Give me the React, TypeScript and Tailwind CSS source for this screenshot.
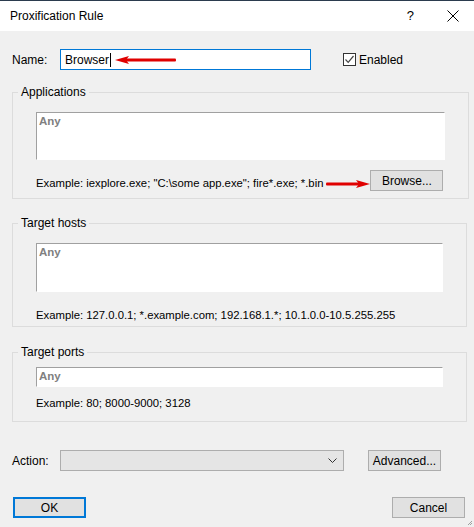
import React from "react";

const font = { fontFamily: '"Liberation Sans", Arial, sans-serif' };

function Group({ title, children, className = "" }: { title: string; children: React.ReactNode; className?: string }) {
  return (
    <fieldset className={`border border-[#dcdcdc] ${className}`}>
      <legend className="ml-[5px] px-[3px] text-[12px] leading-[14px] text-black">{title}</legend>
      <div className="px-[23px]">{children}</div>
    </fieldset>
  );
}

function AnyBox({ h }: { h: string }) {
  return (
    <div className={`${h} w-full bg-white border-t border-l border-t-[#a0a0a0] border-l-[#a0a0a0] border-r border-b border-r-white border-b-white pl-[2px] pt-px text-[11.5px] font-bold text-[#808080] leading-[14px]`}>
      Any
    </div>
  );
}

function Btn({ label, className = "" }: { label: string; className?: string }) {
  return (
    <button className={`h-[21px] w-[73px] bg-[#e1e1e1] border border-[#adadad] text-[12px] leading-[14px] text-black ${className}`}>
      {label}
    </button>
  );
}

function RedArrow({ dir, width }: { dir: "left" | "right"; width: number }) {
  return (
    <svg width={width} height="10" viewBox={`0 0 ${width} 10`} className="block">
      {dir === "left" ? (
        <>
          <rect x="8" y="3.5" width={width - 8} height="3" fill="#e00000" rx="1" />
          <polygon points="0,5 14,1 11,5 14,9" fill="#e00000" />
        </>
      ) : (
        <>
          <rect x="0" y="3.5" width={width - 8} height="3" fill="#e00000" rx="1" />
          <polygon points={`${width},5 ${width - 14},1 ${width - 11},5 ${width - 14},9`} fill="#e00000" />
        </>
      )}
    </svg>
  );
}

export default function App() {
  return (
    <div className="w-[474px] h-[527px] bg-[#f0f0f0] border-t border-t-[#2b3b4e] flex flex-col overflow-hidden" style={font}>
      {/* Title bar */}
      <div className="h-[30px] bg-white flex items-center shrink-0">
        <span className="ml-[10px] text-[12px] text-black">Proxification Rule</span>
        <span className="ml-auto mr-[33px] text-[13px] text-black">?</span>
        <svg width="12" height="12" viewBox="0 0 12 12" className="mr-[15px]">
          <path d="M0.5 0.5 L11.5 11.5 M11.5 0.5 L0.5 11.5" stroke="#000" strokeWidth="1" />
        </svg>
      </div>

      <div className="flex-1 flex flex-col pl-[12px] pr-[7px] border-l border-l-[#b0b0b0] -ml-px">
        {/* Name row */}
        <div className="mt-[18px] h-[21px] flex items-center">
          <span className="w-[48px] text-[12px] text-black">Name:</span>
          <div className="w-[251px] h-[21px] bg-white border border-[#0078d7] flex items-center pl-[4px]">
            <span className="text-[12px] text-black">Browser</span>
            <span className="w-px h-[14px] bg-black ml-px" />
            <span className="ml-[4px]">
              <RedArrow dir="left" width={61} />
            </span>
          </div>
          <div className="ml-[32px] flex items-center">
            <div className="w-[13px] h-[13px] border border-[#333333] bg-white flex items-center justify-center">
              <svg width="11" height="11" viewBox="0 0 11 11">
                <path d="M1.5 5.5 L4.2 8.3 L9.5 2" stroke="#444" strokeWidth="1.2" fill="none" />
              </svg>
            </div>
            <span className="ml-[3px] text-[12px] text-black">Enabled</span>
          </div>
        </div>

        {/* Applications */}
        <Group title="Applications" className="mt-[15px] pb-[7px]">
          <div className="mt-[13px]">
            <AnyBox h="h-[48px]" />
          </div>
          <div className="mt-[10px] h-[21px] flex items-center">
            <span className="text-[11.3px] whitespace-nowrap text-black mt-[6px]">
              Example: iexplore.exe; "C:\some app.exe"; fire*.exe; *.bin
            </span>
            <span className="ml-[3px] mt-[6px]">
              <RedArrow dir="right" width={44} />
            </span>
            <Btn label="Browse..." className="ml-auto mr-[2px] w-[73px]" />
          </div>
        </Group>

        {/* Target hosts */}
        <Group title="Target hosts" className="mt-[17px] pb-[4px]">
          <div className="mt-[13px]">
            <AnyBox h="h-[49px]" />
          </div>
          <div className="mt-[16px] h-[14px] flex items-center whitespace-nowrap text-[11.3px] text-black">
            Example: 127.0.0.1; *.example.com; 192.168.1.*; 10.1.0.0-10.5.255.255
          </div>
        </Group>

        {/* Target ports */}
        <Group title="Target ports" className="mt-[18px] pb-[11px]">
          <div className="mt-[8px]">
            <AnyBox h="h-[20px]" />
          </div>
          <div className="mt-[9px] h-[14px] flex items-center whitespace-nowrap text-[11.3px] text-black">
            Example: 80; 8000-9000; 3128
          </div>
        </Group>

        {/* Action row */}
        <div className="mt-[28px] h-[21px] flex items-center">
          <span className="w-[48px] text-[12px] text-black">Action:</span>
          <div className="w-[284px] h-[21px] bg-[#e5e5e5] border border-[#adadad] flex items-center justify-end pr-[6px]">
            <svg width="9" height="6" viewBox="0 0 9 6">
              <path d="M0.5 0.5 L4.5 4.5 L8.5 0.5" stroke="#333" strokeWidth="1" fill="none" />
            </svg>
          </div>
          <Btn label="Advanced..." className="ml-[24px]" />
        </div>

        {/* Buttons */}
        <div className="mt-[26px] h-[21px] flex items-center">
          <button className="ml-[1px] h-[21px] w-[73px] bg-[#e1e1e1] border-2 border-[#0078d7] text-[12px] text-black">
            OK
          </button>
          <Btn label="Cancel" className="ml-auto mr-[2px]" />
        </div>
        <div className="flex-1 flex items-end justify-end -mr-[7px]">
          <svg width="6" height="6" viewBox="0 0 6 6" className="mb-[1px] mr-[1px]">
            <path d="M5 1 L1 5 M5 3 L3 5" stroke="#a0a0a0" strokeWidth="1" />
          </svg>
        </div>
      </div>
    </div>
  );
}
